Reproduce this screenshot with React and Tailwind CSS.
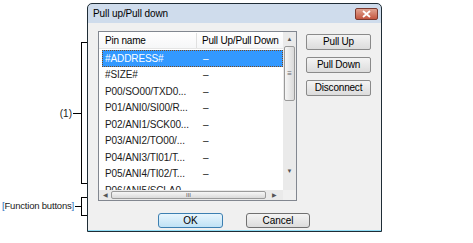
import React from 'react';

const rows = [
  '#ADDRESS#',
  '#SIZE#',
  'P00/SO00/TXD0...',
  'P01/ANI0/SI00/R...',
  'P02/ANI1/SCK00...',
  'P03/ANI2/TO00/...',
  'P04/ANI3/TI01/T...',
  'P05/ANI4/TI02/T...',
  'P06/ANI5/SCLA0...',
];

const SideButton = ({ children }) => (
  <button className="h-[16px] w-[65px] rounded-[2px] border border-[#8a8a8a] bg-gradient-to-b from-[#f4f4f4] to-[#dcdcdc] text-[10px] leading-none tracking-[-0.2px] text-black">
    {children}
  </button>
);

const App = () => {
  return (
    <div
      className="flex h-[243px] w-[473px] bg-white"
      style={{ fontFamily: '"Liberation Sans", Arial, sans-serif' }}
    >
      {/* annotations */}
      <div className="flex w-[88px] shrink-0 flex-col">
        <div className="mt-[42px] flex h-[142px] items-center justify-end">
          <span className="text-[10px] text-[#1a1a1a]">(1)</span>
          <div className="ml-[1px] h-px w-[8px] bg-black" />
          <div className="h-full w-[7px] border-y border-l border-black" />
        </div>
        <div className="mt-[13px] flex h-[19px] items-center justify-end">
          <span className="whitespace-nowrap text-[9.5px] tracking-[-0.2px] text-[#1a1a1a]">
            <span className="text-[#2a6ebb]">[</span>Function buttons<span className="text-[#2a6ebb]">]</span>
          </span>
          <div className="ml-[1px] h-px w-[6px] bg-black" />
          <div className="h-full w-[7px] border-y border-l border-black" />
        </div>
      </div>

      {/* dialog */}
      <div className="-ml-[1px] mt-[3px] flex h-[229px] w-[295px] shrink-0 flex-col rounded-t-[5px] border border-[#1f2d36] bg-[#cfdcec]">
        <div className="flex h-[19px] items-center justify-between pl-[5px] pr-[3px]">
          <span className="text-[10px] tracking-[-0.1px] text-black">Pull up/Pull down</span>
          <div className="flex h-[12px] w-[23px] items-center justify-center rounded-[2px] border border-[#7a3a30] bg-gradient-to-b from-[#e0a391] to-[#c4553f]">
            <svg width="9" height="8" viewBox="0 0 9 8">
              <path d="M1 1 L8 7 M8 1 L1 7" stroke="white" strokeWidth="1.8" />
            </svg>
          </div>
        </div>
        <div className="flex flex-1 flex-col border-b border-[#8fdcf4] bg-[#f0f0f0] px-[10px] pt-[8px]">
          <div className="flex">
            {/* list box */}
            <div className="flex h-[170px] w-[200px] border border-[#828790] bg-white">
              <div className="flex flex-1 flex-col overflow-hidden">
                <div className="flex h-[17px] shrink-0 items-center border-b border-[#e5e5e5] bg-gradient-to-b from-white to-[#f6f7f8] text-[10px] tracking-[-0.2px] text-black">
                  <span className="w-[98px] border-r border-[#e0e0e0] pl-[6px]">Pin name</span>
                  <span className="pl-[5px] whitespace-nowrap">Pull Up/Pull Down</span>
                </div>
                <div className="relative flex-1 overflow-hidden pl-[3px] pt-[1px]">
                  {rows.map((r, i) => (
                    <div
                      key={r}
                      className={`flex h-[16.5px] items-center text-[10px] tracking-[-0.1px] ${
                        i === 0
                          ? 'border border-dotted border-[#7a4a20] bg-[#3399ff] text-white'
                          : 'border border-transparent text-[#1a1a1a]'
                      }`}
                    >
                      <span className="w-[100px] whitespace-nowrap pl-[2px]">{r}</span>
                      <span>–</span>
                    </div>
                  ))}
                  {/* horizontal scrollbar */}
                  <div className="absolute bottom-0 left-0 right-0 flex h-[10px] items-center bg-[#eaeaea]">
                    <span className="w-[12px] text-center text-[6px] text-[#555]">◀</span>
                    <div className="flex h-[8px] w-[155px] items-center justify-center rounded-[2px] border border-[#9a9a9a] bg-gradient-to-b from-[#f6f6f6] to-[#dadada] text-[6px] leading-none text-[#555]">
                      III
                    </div>
                    <span className="flex-1 text-center text-[6px] text-[#555]">▶</span>
                  </div>
                </div>
              </div>
              {/* vertical scrollbar */}
              <div className="flex w-[13px] flex-col bg-[#eaeaea]">
                <div className="flex h-[14px] items-center justify-center text-[6px] text-[#555]">▲</div>
                <div className="mx-[1px] flex h-[55px] items-center justify-center rounded-[2px] border border-[#9a9a9a] bg-gradient-to-r from-[#f6f6f6] to-[#dadada] text-[8px] leading-none text-[#666]">
                  ≡
                </div>
                <div className="flex flex-1 items-end justify-center pb-[14px] text-[6px] text-[#555]">▼</div>
                <div className="h-[10px] bg-[#f0f0f0]" />
              </div>
            </div>
            {/* function buttons */}
            <div className="ml-[9px] mt-[3px] flex flex-col gap-[7px]">
              <SideButton>Pull Up</SideButton>
              <SideButton>Pull Down</SideButton>
              <SideButton>Disconnect</SideButton>
            </div>
          </div>
          <div className="mt-[12px] flex justify-center gap-[23px] pr-[1px]">
            <button className="h-[15px] w-[65px] rounded-[3px] border border-[#3c7fb1] bg-gradient-to-b from-[#e8f5fd] to-[#bfe2f5] text-[10px] leading-none text-black">
              OK
            </button>
            <button className="h-[15px] w-[64px] rounded-[3px] border border-[#707070] bg-gradient-to-b from-[#f4f4f4] to-[#dcdcdc] text-[10px] leading-none text-black">
              Cancel
            </button>
          </div>
        </div>
      </div>
    </div>
  );
};

export default App;
